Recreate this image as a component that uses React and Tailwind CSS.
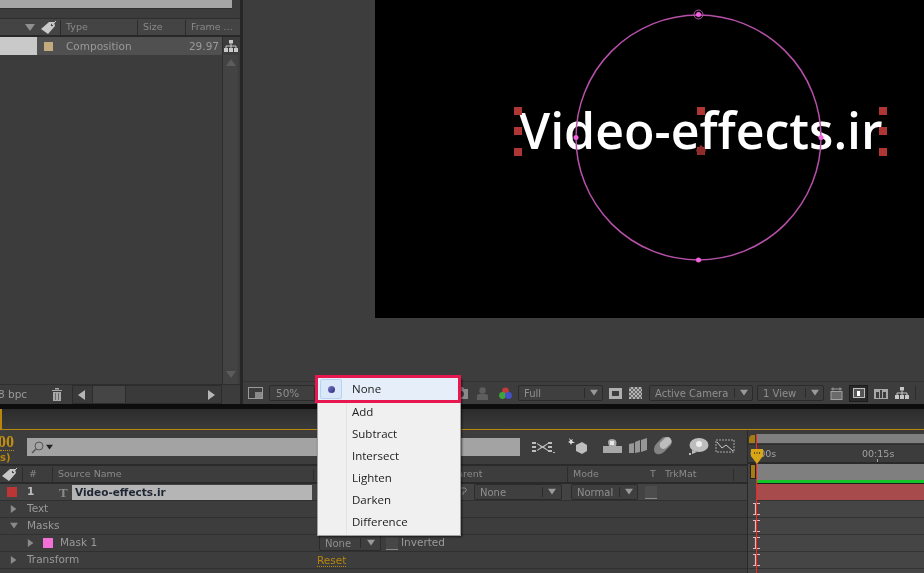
import { Fragment } from "react";

const panelFont = { fontFamily: '"DejaVu Sans", sans-serif' };

function Tri({ dir = "right", className = "" }) {
  const pts = {
    right: "1,0 8,5 1,10",
    left: "8,0 1,5 8,10",
    down: "0,1 10,1 5,8",
    up: "0,8 10,8 5,1",
  };
  return (
    <svg width="10" height="10" viewBox="0 0 10 10" className={className}>
      <polygon points={pts[dir]} fill="currentColor" />
    </svg>
  );
}

function Dropdown({ label, width, arrow = 20, className = "" }) {
  return (
    <div
      className={`flex items-center shrink-0 h-[16px] bg-[#3f3f3f] border border-[#2b2b2b] rounded-[2px] text-[#8f8f8f] text-[10px] ${className}`}
      style={{ width }}
    >
      <span className="flex-1 pl-[5px] whitespace-nowrap overflow-hidden">{label}</span>
      <span className="flex items-center justify-center h-[10px] border-l border-[#2b2b2b] text-[#9a9a9a]" style={{ width: arrow }}>
        <Tri dir="down" className="w-[8px] h-[8px]" />
      </span>
    </div>
  );
}

function NetworkIcon({ className = "" }) {
  return (
    <svg width="14" height="12" viewBox="0 0 14 12" className={className}>
      <path d="M5 0h4v3.500H5zM0 8h4v4H0zM5 8h4v4H5zM10 8h4v4h-4z" fill="#c8c8c8" />
      <path d="M7 3.500V8M2 8V6h10v2" stroke="#c8c8c8" fill="none" />
    </svg>
  );
}

function TagIcon({ className = "" }) {
  return (
    <svg width="16" height="13" viewBox="0 0 16 13" className={className}>
      <path d="M0 8 8 1h5l1 4-7 8z" fill="#c9c9c9" />
      <circle cx="11" cy="4" r="1.200" fill="#444" />
      <path d="M11 4 15 0" stroke="#c9c9c9" />
    </svg>
  );
}

function ProjectPanel() {
  return (
    <div className="w-[243px] shrink-0 flex flex-col bg-[#3c3c3c] border-r-[3px] border-[#262626]">
      <div className="h-[9px] w-[232px] shrink-0 bg-[#a5a5a5] border-b border-[#2f2f2f]" />
      <div className="h-[10px] shrink-0 border-b border-[#2e2e2e]" />
      <div className="h-[18px] pt-[1px] shrink-0 flex items-center bg-[#444444] border-b-2 border-[#282828] text-[9.500px] text-[#8a8a8a]">
        <div className="w-[40px] flex justify-end pr-[5px]">
          <Tri dir="down" className="text-[#8f8f8f]" />
        </div>
        <TagIcon className="mr-[3px] ml-[1px]" />
        <div className="w-[77px] border-l border-[#2c2c2c] pl-[5px]">Type</div>
        <div className="w-[48px] border-l border-[#2c2c2c] pl-[5px]">Size</div>
        <div className="flex-1 border-l border-[#2c2c2c] pl-[5px] whitespace-nowrap">Frame ...</div>
      </div>
      <div className="flex-1 flex min-h-0 pr-[2px]">
        <div className="flex-1 min-w-0">
          <div className="h-[18px] flex items-center bg-[#505050] text-[10.500px] text-[#9a9a9a]">
            <div className="w-[37px] h-full bg-[#c9c9c9]" />
            <div className="w-[9px] h-[9px] ml-[7px] bg-[#c4ab7f]" />
            <span className="ml-[13px] flex-1 pt-[1px]">Composition</span>
            <span className="pr-[3px] pt-[1px]">29.97</span>
          </div>
        </div>
        <div className="w-[16px] shrink-0 flex flex-col items-center bg-[#434343] border-l border-[#2e2e2e] text-[#5c5c5c]">
          <div className="h-[18px] w-full flex items-center justify-center bg-[#3c3c3c]">
            <NetworkIcon />
          </div>
          <Tri dir="up" className="mt-[3px]" />
          <div className="flex-1" />
          <Tri dir="down" className="mb-[4px]" />
        </div>
      </div>
      <div className="h-[20px] shrink-0 flex items-center border-t border-[#2e2e2e] text-[10.500px] text-[#9a9a9a]">
        <span className="w-[54px] -ml-[2px] whitespace-nowrap">8 bpc</span>
        <svg width="10" height="13" viewBox="0 0 10 13" className="mr-[10px]">
          <path d="M0 2h10v1H0zM3 0h4v1.500H3zM1 4h8v9H1z" fill="#a8a8a8" />
          <path d="M3.500 5v7M6.500 5v7" stroke="#6a6a6a" />
        </svg>
        <div className="w-[150px] h-full flex items-center border border-[#2c2c2c] bg-[#3a3a3a] text-[#b5b5b5]">
          <Tri dir="left" className="ml-[4px]" />
          <div className="w-[34px] h-full ml-[5px] bg-[#454545] border-x border-[#2c2c2c]" />
          <div className="flex-1" />
          <Tri className="mr-[4px]" />
        </div>
      </div>
    </div>
  );
}

const handles = [
  [518, 111], [518, 131], [518, 152],
  [701, 111], [701, 151],
  [883, 111], [883, 131], [883, 152],
];

function Composition() {
  return (
    <div className="relative flex-1 h-[318px] bg-black overflow-hidden">
      <div
        className="absolute left-[144px] top-[93px] text-[50px] leading-[74px] font-semibold text-white whitespace-nowrap"
        style={{ fontFamily: '"Open Sans", sans-serif' }}
      >
        Video-effects.ir
      </div>
      <svg width="549" height="318" viewBox="375 0 549 318" className="absolute inset-0">
        <circle cx="698.500" cy="137.500" r="122.500" fill="none" stroke="#b650a8" strokeWidth="1.500" />
        <circle cx="698.500" cy="14.500" r="4.500" fill="none" stroke="#b650a8" />
        {[[698.5, 14.5], [698.5, 260], [576, 137.5], [821, 137.5]].map(([x, y]) => (
          <circle key={`${x}-${y}`} cx={x} cy={y} r="2.500" fill="#f45fe0" />
        ))}
        {handles.map(([x, y]) => (
          <rect key={`${x}-${y}`} x={x - 4} y={y - 4} width="8" height="8" fill="#b03636" />
        ))}
        <polygon points="701,145 706,150 704,155 698,155 696,150" fill="#8e2c2c" />
      </svg>
    </div>
  );
}

function ViewerToolbar() {
  return (
    <div className="h-[23px] shrink-0 flex items-center bg-[#3d3d3d] border-t border-[#333] pl-[5px] text-[10.500px] text-[#8f8f8f]">
      <div className="w-[15px] h-[12px] border border-[#9a9a9a] flex items-end justify-end mr-[6px]">
        <div className="w-[7px] h-[6px] bg-[#8a8a8a]" />
      </div>
      <div className="w-[46px] h-[16px] pl-[6px] bg-[#3f3f3f] border border-[#2b2b2b] rounded-[2px] leading-[14px]">50%</div>
      <div className="w-[139px] shrink-0" />
      <svg width="14" height="12" viewBox="0 0 14 12" className="mr-[9px] shrink-0">
        <path d="M0 2h4l1-2h4l1 2h4v10H0z" fill="#8a8a8a" />
        <circle cx="7" cy="7" r="3" fill="#3d3d3d" />
      </svg>
      <svg width="11" height="13" viewBox="0 0 11 13" className="mr-[11px]">
        <circle cx="5.500" cy="3.500" r="3.200" fill="#5e5e5e" />
        <path d="M0 13V9q0-2 3-2h5q3 0 3 2v4z" fill="#5e5e5e" />
      </svg>
      <svg width="13" height="13" viewBox="0 0 13 13" className="mr-[6px]">
        <circle cx="6.500" cy="4" r="3.400" fill="#c23a3a" />
        <circle cx="3.500" cy="8.500" r="3.400" fill="#3da33d" />
        <circle cx="9.500" cy="8.500" r="3.400" fill="#4550c8" />
      </svg>
      <Dropdown label="Full" width={85} arrow={18} className="mr-[6px]" />
      <svg width="13" height="11" viewBox="0 0 13 11" className="mr-[7px]">
        <path d="M0 0h13v11H0zM3 3v5h7V3z" fill="#b0b0b0" fillRule="evenodd" />
      </svg>
      <div className="w-[13px] h-[12px] mr-[7px] bg-[repeating-conic-gradient(#b5b5b5_0_25%,#6a6a6a_0_50%)] bg-[length:4px_4px]" />
      <Dropdown label="Active Camera" width={104} arrow={18} className="mr-[4px]" />
      <Dropdown label="1 View" width={67} arrow={18} className="mr-[6px]" />
      <svg width="13" height="13" viewBox="0 0 13 13" className="mr-[6px]">
        <path d="M3 .5v3M10 .5v3M1 2h11" stroke="#a0a0a0" />
        <rect x="1" y="4.500" width="11" height="8" fill="#6a6a6a" stroke="#a0a0a0" />
      </svg>
      <div className="w-[19px] h-[17px] mr-[6px] flex items-center justify-center bg-[#2a2a2a] border border-[#1c1c1c]">
        <div className="w-[12px] h-[10px] border border-[#c0c0c0] bg-[#555] flex items-center justify-center">
          <div className="w-[3px] h-[5px] bg-white" />
        </div>
      </div>
      <svg width="14" height="11" viewBox="0 0 14 11" className="mr-[7px]">
        <path d="M0 1h14v10H0zM2 4v6h3V4zM6 2v8h2V2zM9 4v6h3V4z" fill="#a8a8a8" fillRule="evenodd" />
      </svg>
      <NetworkIcon className="mr-[6px]" />
      <div className="h-[14px] border-l border-[#2c2c2c]" />
    </div>
  );
}

function Viewer() {
  return (
    <div className="flex-1 min-w-0 flex flex-col bg-[#3d3d3d]">
      <div className="flex h-[381px] shrink-0 pl-[132px] items-start">
        <Composition />
      </div>
      <ViewerToolbar />
    </div>
  );
}

const layers = [
  { label: "Text", arrow: "right" },
  { label: "Masks", arrow: "down" },
  { label: "Mask 1", arrow: "right", mask: true },
  { label: "Transform", arrow: "right", reset: true },
];

function LayerSubRow({ row }) {
  return (
    <div className="h-[17px] flex items-center border-b border-[#303030] text-[10.500px] text-[#9a9a9a]">
      <Tri dir={row.arrow} className={`text-[#8a8a8a] w-[8px] h-[8px] ${row.mask ? "ml-[27px]" : "ml-[10px]"}`} />
      {row.mask && <div className="w-[10px] h-[10px] ml-[8px] bg-[#f46fd8]" />}
      <span className={`${row.mask ? "ml-[7px] w-[259px]" : "ml-[9px] w-[290px]"}`}>{row.label}</span>
      {row.mask && (
        <Fragment>
          <Dropdown label="None" width={62} />
          <div className="w-[12px] h-[13px] ml-[5px] bg-[#474747] border-b border-[#8a8a8a]" />
          <span className="ml-[3px]">Inverted</span>
        </Fragment>
      )}
      {row.reset && <span className="text-[#b8860b] border-b border-dotted border-[#b8860b] leading-[12px]">Reset</span>}
    </div>
  );
}

function TimelineLeft() {
  return (
    <div className="w-[748px] shrink-0 border-r border-[#282828] bg-[#3d3d3d]">
      <div className="h-[36px] flex items-center border-b-2 border-[#2a2a2a]">
        <div className="w-[27px] shrink-0 self-start pt-[4px] leading-none overflow-hidden" style={{ fontFamily: '"Liberation Serif", serif' }}>
          <div className="text-[16px] font-bold text-[#c18f12] border-b border-dotted border-[#c18f12] w-[14px] overflow-hidden flex justify-end">00</div>
          <div className="text-[10px] font-bold text-[#b8860b] mt-[2px]" style={panelFont}>s)</div>
        </div>
        <div className="w-[493px] h-[18px] shrink-0 flex items-center pl-[4px] bg-[#a3a3a3] text-[#222]">
          <svg width="13" height="13" viewBox="0 0 13 13">
            <circle cx="8" cy="5" r="4" fill="none" stroke="#555" />
            <path d="M5 8 1 12" stroke="#555" strokeWidth="1.500" />
          </svg>
          <Tri dir="down" className="w-[7px] h-[7px] ml-[2px]" />
        </div>
        <svg width="210" height="20" viewBox="0 0 210 20" className="ml-[12px]">
          <g fill="#bdbdbd">
            {/* composition flowchart */}
            <path d="M0 5h4v2H0zM0 9h4v2H0zM0 13h4v2H0zM16 5h4v2h-4zM16 9h4v2h-4zM16 13h4v2h-4zM21 15h2v1h-2z" />
            <path d="M5 6l5 3h1l5-3v1l-4 3 4 3v1l-5-3h-1l-5 3v-1l4-3-4-3z" />
            {/* draft 3d */}
            <path d="M37 1l2 2 2-1-1 2 3 2-3 0-1 2-1-2-2-1 2-1z" fill="#dcdcdc" />
            <path d="M44 8l6-3 5 3v6l-5 3-6-3z" />
            {/* frame blending */}
            <path d="M97 7l5-1v10l-5 0zM103 5l5-2v12l-5 1zM109 3l6-2v12l-6 2z" opacity=".7" />
            {/* motion blur */}
            <path d="M122 12q0-3 3-6l5-5q3-2 6-1t4 4q0 3-2 5l-6 6q-4 3-7 2t-3-5z" opacity=".55" />
            <path d="M128 6l5-5q3-2 5 0t1 5l-5 5q-3 2-5 0t-1-5z" />
            {/* brainstorm */}
            <ellipse cx="167" cy="8" rx="9.500" ry="7" />
            <path d="M160 13l5 2-5 2zM157 16h2v2h-2z" />
          </g>
          {/* live update: hat */}
          <path d="M71 9h6q-3-7 3-7t4 7h6v7H71z" fill="#a8a8a8" />
          <path d="M78 4h4v4h-4z" fill="#e6e6e6" />
          <circle cx="167" cy="7" r="3" fill="#eee" />
          <path d="M184 3h18v12h-18z" fill="none" stroke="#a8a8a8" strokeDasharray="2 1" />
          <path d="M185 5l5 6 4-3 7 6" fill="none" stroke="#c8c8c8" />
        </svg>
      </div>
      <div className="h-[18px] pt-[1px] flex items-center border-b-2 border-[#2a2a2a] text-[9.500px] text-[#8a8a8a]">
        <TagIcon className="ml-[2px] mr-[4px]" />
        <div className="w-[30px] border-l border-[#2c2c2c] pl-[6px]">#</div>
        <div className="w-[261px] border-l border-[#2c2c2c] pl-[5px]">Source Name</div>
        <div className="border-l border-[#2c2c2c] h-[12px] w-[139px]" />
        <div className="w-[115px]">Parent</div>
        <div className="w-[78px] border-l border-[#2c2c2c] pl-[5px]">Mode</div>
        <div className="w-[20px] pl-[5px]">T</div>
        <div className="w-[68px] whitespace-nowrap">TrkMat</div>
        <div className="border-l border-[#2c2c2c] h-[12px]" />
      </div>
      <div className="h-[17px] flex items-center border-b border-[#303030] bg-[#434343]">
        <div className="w-[10px] h-[10px] ml-[7px] bg-[#bd3636]" />
        <div className="w-[10px] ml-[10px] text-[10.500px] font-bold text-[#bdbdbd]">1</div>
        <div className="w-[35px] pl-[22px] text-[13px] font-bold text-[#8a8a8a] leading-none" style={{ fontFamily: '"Liberation Serif", serif' }}>T</div>
        <div className="w-[240px] h-[15px] pl-[3px] bg-[#b5b5b5] text-[10.500px] font-bold text-[#1f2633] leading-[15px]">Video-effects.ir</div>
        <div className="w-[162px] shrink-0 flex justify-end pr-[6px]">
          <svg width="8" height="10" viewBox="0 0 8 10">
            <path d="M0 1h5q2 1 1 3T3 5v3" fill="none" stroke="#8a8a8a" />
          </svg>
        </div>
        <Dropdown label="None" width={88} arrow={19} />
        <div className="w-[9px] shrink-0" />
        <Dropdown label="Normal" width={67} arrow={18} />
        <div className="w-[12px] h-[13px] ml-[7px] bg-[#4c4c4c] border-b border-[#8a8a8a]" />
      </div>
      {layers.map((row) => (
        <LayerSubRow key={row.label} row={row} />
      ))}
    </div>
  );
}

function TimelineRight() {
  return (
    <div className="relative flex-1 min-w-0 overflow-hidden bg-[#454545] h-[143px]">
      <div className="h-[14px] pt-[4px] pl-[8px] bg-[#3a3a3a]">
        <div className="h-[9px] bg-[#7f7f7f]" />
      </div>
      <div className="h-[20px] bg-[#3c3c3c] border-t border-[#2e2e2e] border-b-2 border-b-[#2a2a2a] relative">
        <span className="absolute left-[114px] top-[2px] text-[9.500px] text-[#a2a2a2] whitespace-nowrap">00:15s</span>
        <span className="absolute left-[2px] top-[2px] text-[9.500px] text-[#a2a2a2] whitespace-nowrap">0:00s</span>
        <div className="absolute left-[129px] top-[14px] w-[1px] h-[3px] bg-[#9e9e9e]" />
      </div>
      <div className="h-[16px] ml-[8px] bg-[#7f7f7f]" />
      <div className="h-[4px] ml-[8px] bg-[#14c428] border-b border-[#1d1d1d]" />
      <div className="h-[17px] ml-[8px] bg-[#a74b4d] border-b border-[#333]" />
      {[0, 1, 2, 3].map((i) => (
        <div key={i} className="h-[17px] border-b border-[#333] flex items-center pl-[5px]">
          <svg width="7" height="12" viewBox="0 0 7 12">
            <path d="M0 .5h7M0 11.500h7M2.500 0v12" stroke="#e6b8b8" strokeWidth="1.200" />
          </svg>
        </div>
      ))}
      {/* playhead and work area handle sit over the rows */}
      <div className="absolute left-[8px] top-[4px] bottom-0 w-[1px] bg-[#ff2020]" />
      <div className="absolute left-[1px] top-[5px] w-[6px] h-[8px] rounded-tl-[4px] bg-[#a57c10]" />
      <div className="absolute left-[2px] top-[34px] w-[6px] h-[15px] bg-[#a57c10] border border-[#222]" />
      <svg width="12" height="15" viewBox="0 0 12 15" className="absolute left-[3px] top-[19px]">
        <path d="M0 0h12v7l-6 8-6-8z" fill="#d7a516" />
        <path d="M3 3h1v2H3zM5.500 3h1v2h-1zM8 3h1v2H8z" fill="#6a5010" />
      </svg>
    </div>
  );
}

const maskModes = ["None", "Add", "Subtract", "Intersect", "Lighten", "Darken", "Difference"];

function MaskMenu() {
  return (
    <div
      className="absolute left-[317px] top-[378px] w-[144px] pb-[2px] bg-[#f0f0f0] border border-[#a0a0a0] shadow-[1px_1px_2px_rgba(0,0,0,0.6)] text-[11.500px] text-[#222] z-10"
      style={{ fontFamily: '"Open Sans", sans-serif' }}
    >
      <div className="absolute left-[28px] top-0 bottom-0 border-l border-[#e2e3e3]" />
      {maskModes.map((mode) => (
        <div key={mode} className="h-[22px] flex items-center pl-[34px] leading-none">
          {mode}
        </div>
      ))}
      <div className="absolute -left-[3px] -top-[4px] -right-[1px] h-[28px] flex items-center border-[3px] border-[#e8174f] bg-[#e6eefa]">
        <div className="w-[22px] h-[20px] ml-[2px] flex items-center justify-center bg-[#dbe8fa] border border-[#b5d2f2] rounded-[2px]">
          <div className="w-[7px] h-[7px] rounded-full bg-gradient-to-br from-[#7b78c8] to-[#2e2a80]" />
        </div>
        <span className="ml-[10px]">None</span>
      </div>
    </div>
  );
}

export default function App() {
  return (
    <div className="relative w-[924px] h-[573px] overflow-hidden bg-[#0d0d0d] flex flex-col blur-[0.4px]" style={panelFont}>
      <div className="h-[404px] shrink-0 flex">
        <ProjectPanel />
        <Viewer />
      </div>
      <div className="h-[5px] shrink-0" />
      <div className="flex-1 min-h-0 flex flex-col bg-[#3d3d3d]">
        <div className="h-[21px] shrink-0 bg-gradient-to-b from-[#2c2c2c] to-[#3a3a3a] border-b border-[#b8860b] border-l-2 border-l-[#b8860b]" />
        <div className="flex">
          <TimelineLeft />
          <TimelineRight />
        </div>
      </div>
      <MaskMenu />
    </div>
  );
}
